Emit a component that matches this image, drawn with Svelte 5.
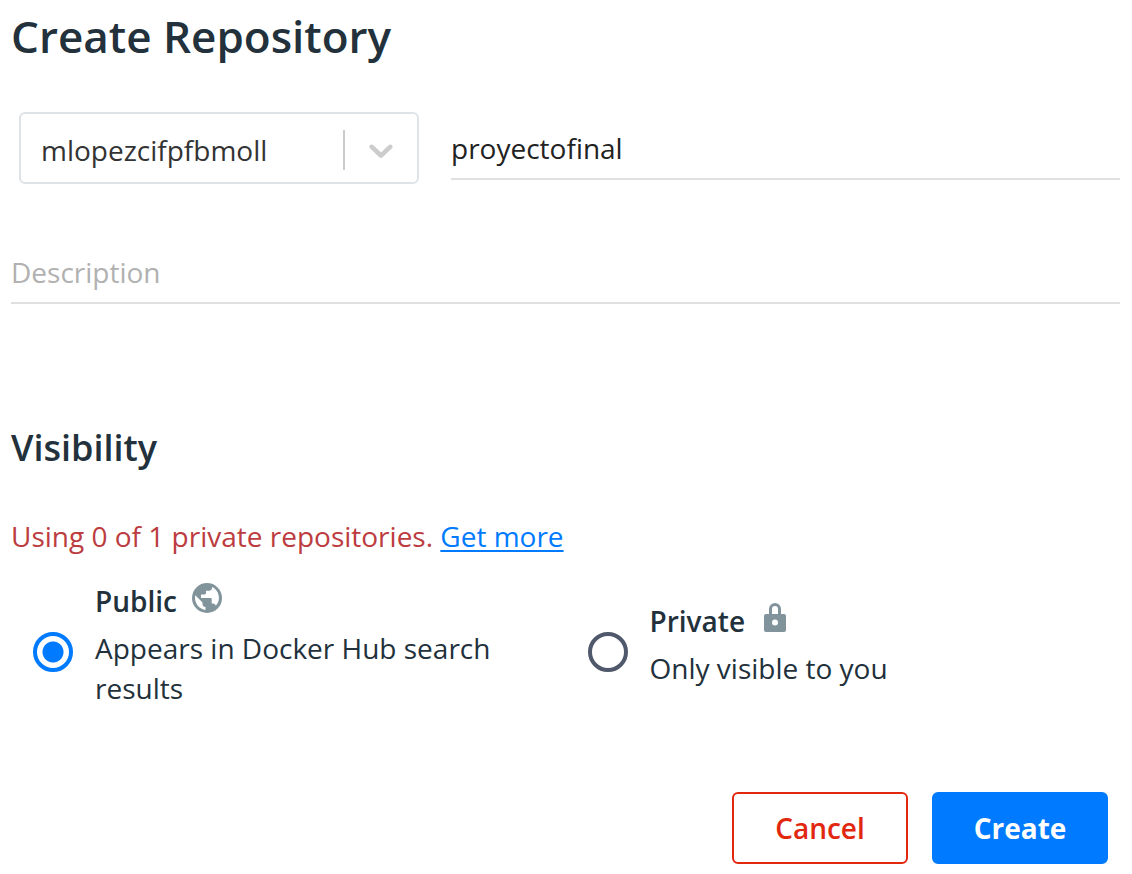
<script>
  let owner = $state('mlopezcifpfbmoll');
  let name = $state('proyectofinal');
  let description = $state('');
  let visibility = $state('public');
</script>

<main>
  <h1>Create Repository</h1>
  <form onsubmit={(event) => event.preventDefault()}>
    <div class="names">
      <div class="owner">
        <select aria-label="Namespace" bind:value={owner}>
          <option>mlopezcifpfbmoll</option>
        </select>
        <svg class="arrow" viewBox="0 0 20 20" aria-hidden="true">
          <path d="M4.516 7.548c0.436-0.446 1.043-0.481 1.576 0l3.908 3.747 3.908-3.747c0.533-0.481 1.141-0.446 1.574 0 0.436 0.445 0.408 1.197 0 1.615-0.406 0.418-4.695 4.502-4.695 4.502-0.217 0.223-0.502 0.335-0.787 0.335s-0.57-0.112-0.789-0.335c0 0-4.287-4.084-4.695-4.502s-0.436-1.17 0-1.615z" />
        </svg>
      </div>
      <input class="line" type="text" aria-label="Repository name" bind:value={name} />
    </div>
    <input class="line" type="text" aria-label="Description" placeholder="Description" bind:value={description} />

    <h2>Visibility</h2>
    <p class="usage">Using 0 of 1 private repositories. <a href="#more">Get more</a></p>
    <div class="choices">
      <label>
        <input type="radio" name="visibility" value="public" bind:group={visibility} />
        <span class="text">
          <span class="title">Public
            <svg class="icon" viewBox="0 0 36 36" aria-hidden="true">
              <circle cx="18" cy="18" r="15" />
              <path class="sea" d="M23 6.900V8C23 9.500 21.700 10.800 20 10.800H17V13C17 13.800 16.300 14.500 15.500 14.500H12V18H21.500C22.200 18 22.700 18.500 22.700 19.200V23.500H24C25.300 23.500 26.400 24.500 26.800 25.700C28.800 23.700 29.900 21 29.900 18C29.900 13 27.200 8.500 23 6.900ZM6.300 15.300L13.500 22.500V24C13.500 25.700 14.800 27 16.500 27V29.900C10.600 29.100 6 24.200 6 18C6 17.100 6.100 16.200 6.300 15.300Z" />
            </svg>
          </span>
          <span>Appears in Docker Hub search results</span>
        </span>
      </label>
      <label>
        <input type="radio" name="visibility" value="private" bind:group={visibility} />
        <span class="text">
          <span class="title">Private
            <svg class="icon" viewBox="0 0 36 36" aria-hidden="true">
              <path fill-rule="evenodd" d="M12 14V9a6 6 0 0 1 12 0V14h3a2 2 0 0 1 2 2v14a2 2 0 0 1-2 2H9a2 2 0 0 1-2-2V16a2 2 0 0 1 2-2zM15 14h6V9a3 3 0 0 0-6 0zM21 22.500a3 3 0 1 0-6 0a3 3 0 1 0 6 0z" />
            </svg>
          </span>
          <span>Only visible to you</span>
        </span>
      </label>
    </div>
    <div class="actions">
      <button type="button">Cancel</button>
      <button class="primary" type="submit">Create</button>
    </div>
  </form>
</main>

<style>
  :global(body) {
    margin: 0;
    background: #fff;
  }
  main {
    padding: 6px 12px 10px 11px;
    color: #22313b;
    font-family: "Open Sans", sans-serif;
    font-size: 28px;
    line-height: 40px;
  }
  main * {
    box-sizing: border-box;
  }
  h1,
  h2 {
    margin: 0;
    font-weight: 600;
  }
  h1 {
    font-size: 44px;
    line-height: 60px;
  }
  h2 {
    margin-top: 120px;
    font-size: 36px;
    line-height: 48px;
  }
  .names {
    display: grid;
    grid-template-columns: 400px 1fr;
    gap: 32px;
    margin: 46px 0 52px;
    padding-left: 8px;
  }
  .owner {
    position: relative;
    height: 72px;
    border: 2px solid #dee3e8;
    border-radius: 6px;
  }
  select {
    width: 100%;
    height: 100%;
    padding: 4px 80px 0 20px;
    border: 0;
    appearance: none;
    background: linear-gradient(#ccc, #ccc) right 72px top 16px / 2px 40px no-repeat;
    color: #333;
    font: inherit;
  }
  .arrow {
    position: absolute;
    right: 16px;
    top: 16px;
    width: 40px;
    height: 40px;
    fill: #ccc;
    pointer-events: none;
  }
  .line {
    width: 100%;
    height: 68px;
    padding: 6px 0 0;
    border: 0;
    border-bottom: 2px solid #e0e0e0;
    outline: 0;
    background: none;
    color: #222;
    font: inherit;
  }
  .line::placeholder {
    color: #b1b1b1;
    opacity: 1;
  }
  .usage {
    margin: 44px 0 24px;
    color: #bc3c40;
  }
  a {
    color: #007bff;
    text-decoration-thickness: 2px;
    text-underline-offset: 3px;
  }
  .choices {
    display: grid;
    grid-template-columns: 1fr 1fr;
  }
  label {
    display: flex;
    align-items: center;
    gap: 22px;
    padding: 0 32px 0 22px;
  }
  .text {
    display: flex;
    flex-direction: column;
  }
  .title {
    display: flex;
    gap: 12px;
    margin-bottom: 6px;
    font-weight: 600;
    line-height: 42px;
  }
  .icon {
    width: 36px;
    height: 36px;
    fill: #81939b;
  }
  .sea {
    fill: #fff;
  }
  input[type='radio'] {
    flex: none;
    width: 40px;
    height: 40px;
    margin: 16px 0 0;
    border: 4px solid #4f596b;
    border-radius: 50%;
    appearance: none;
  }
  input[type='radio']:checked {
    border-color: #007bff;
    background: radial-gradient(circle, #007bff 10px, #fff 11px);
  }
  .actions {
    display: flex;
    justify-content: flex-end;
    gap: 24px;
    margin-top: 84px;
    padding-right: 12px;
  }
  button {
    width: 176px;
    height: 72px;
    border: 2px solid #e1280f;
    border-radius: 6px;
    background: #fff;
    color: #e1280f;
    font: inherit;
    font-weight: 600;
  }
  .primary {
    border-color: #007bff;
    background: #007bff;
    color: #fff;
    font-weight: 700;
  }
</style>
